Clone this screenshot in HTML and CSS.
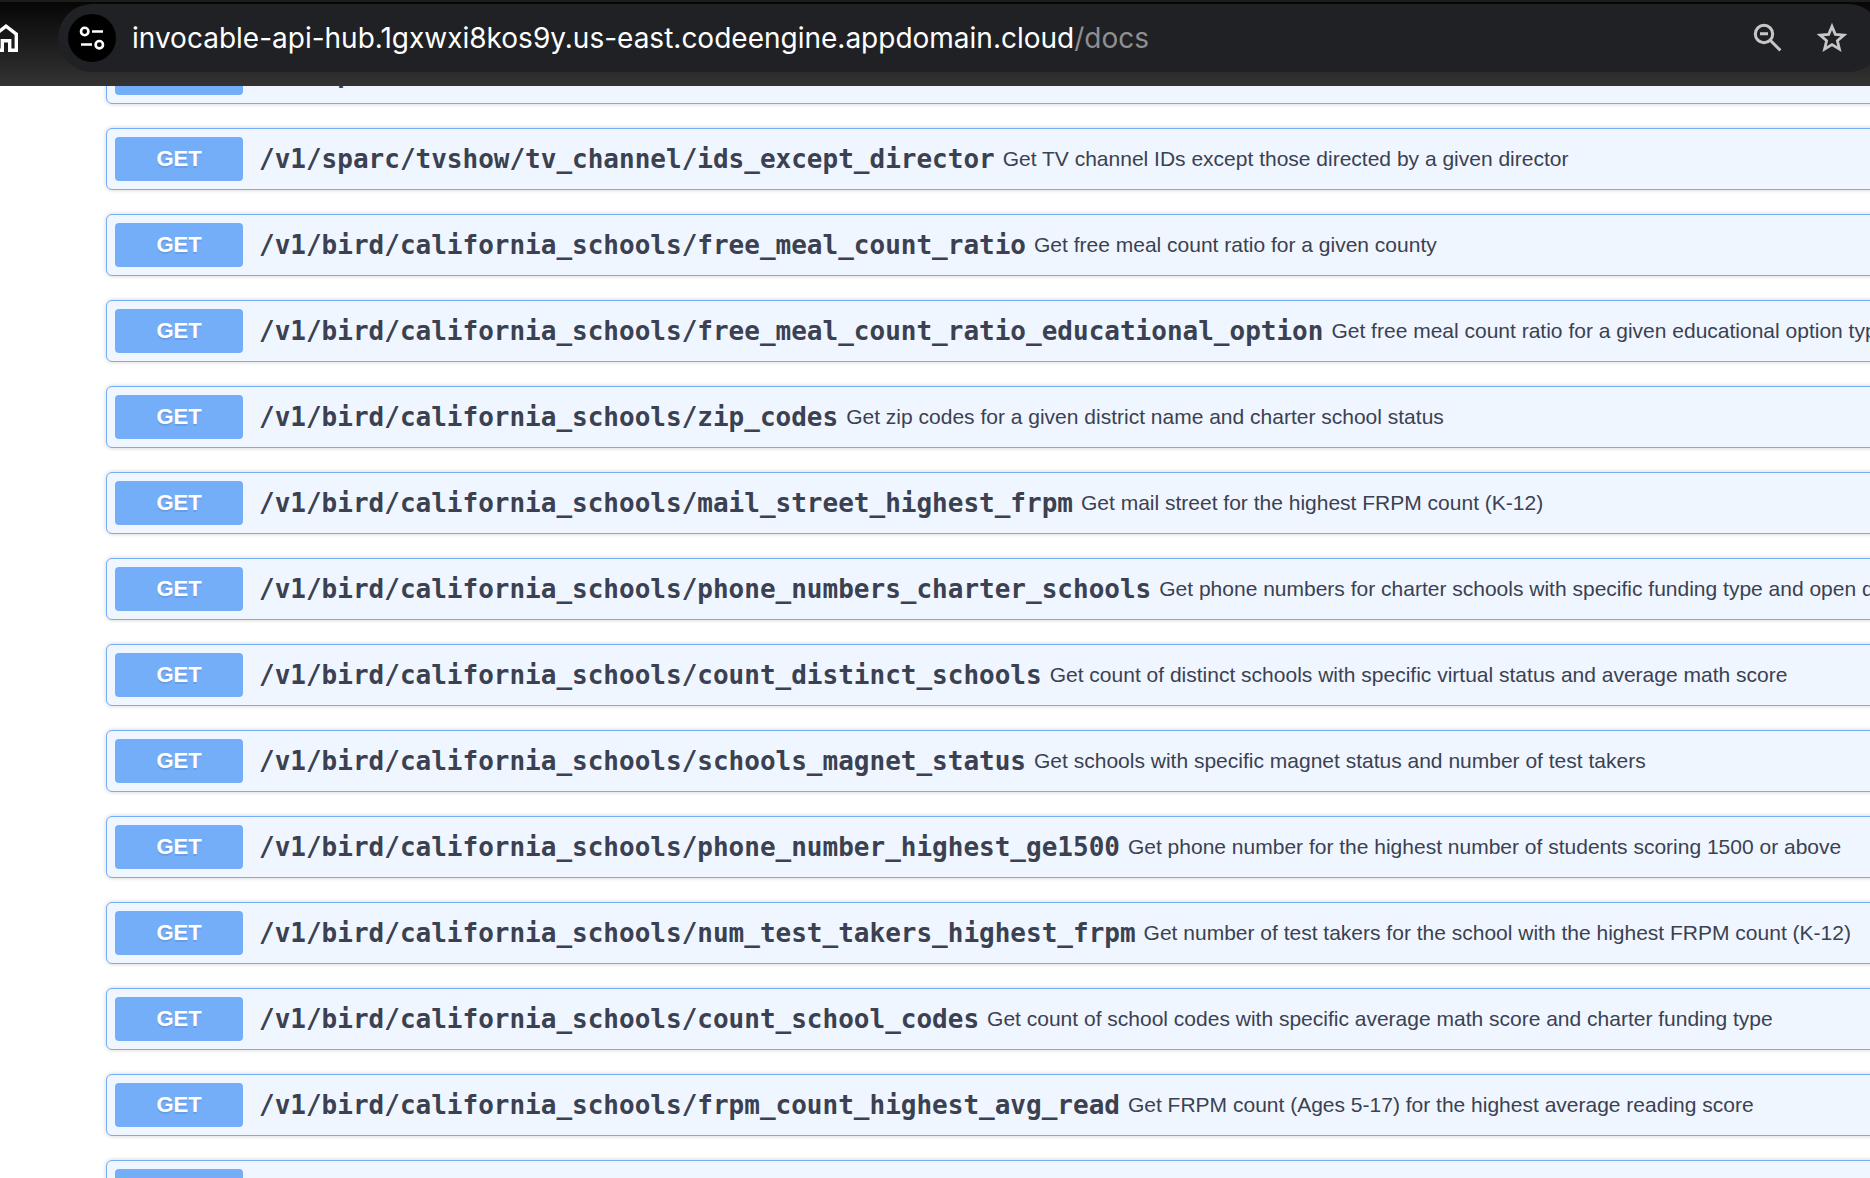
FILE: index.html
```html
<!DOCTYPE html>
<html lang="en">
<head>
<meta charset="utf-8">
<title>invocable-api-hub docs</title>
<link rel="stylesheet" href="styles.css">
</head>
<body>
<header class="toolbar">
  <button class="icon-button home" aria-label="Home">
    <svg width="30" height="32" viewBox="0 0 30 32" fill="none" stroke="#fff" stroke-width="3.4"><path d="M4.7 28.3V12.2L15 4.1l10.3 8.1v16.1h-6.6v-9.6h-7.4v9.6z"/></svg>
  </button>
  <div class="address">
    <button class="icon-button site-info" aria-label="View site information">
      <svg width="48" height="48" viewBox="0 0 48 48" fill="none" stroke="#fff" stroke-width="2.6"><circle cx="16.7" cy="17.5" r="3.7"/><path d="M24 17.5h11M13 30.5h11"/><circle cx="31.3" cy="30.7" r="3.7"/></svg>
    </button>
    <div class="url">invocable-api-hub.1gxwxi8kos9y.us-east.codeengine.appdomain.cloud<span class="url-path">/docs</span></div>
    <button class="icon-button" aria-label="Zoom out">
      <svg width="32" height="32" viewBox="0 0 32 32" fill="none" stroke="#c7c7c7" stroke-width="3"><circle cx="12" cy="12" r="8.7"/><path d="M18 18l10.4 10.4M8 11.8h8"/></svg>
    </button>
    <button class="icon-button" aria-label="Bookmark this page">
      <svg width="32" height="32" viewBox="0 0 32 32" fill="none" stroke="#c7c7c7" stroke-width="2.8"><path d="M16 4.5l3.3 7.9 8.6.7-6.5 5.6 2 8.4-7.4-4.5-7.4 4.5 2-8.4-6.5-5.6 8.6-.7z"/></svg>
    </button>
  </div>
</header>
<main class="viewport">
  <div class="operations">
    <button class="operation"><span class="method">GET</span><span class="path">/v1/sparc</span></button>
    <button class="operation"><span class="method">GET</span><span class="path">/v1/sparc/tvshow/tv_channel/ids_except_director</span><span class="summary">Get TV channel IDs except those directed by a given director</span></button>
    <button class="operation"><span class="method">GET</span><span class="path">/v1/bird/california_schools/free_meal_count_ratio</span><span class="summary">Get free meal count ratio for a given county</span></button>
    <button class="operation"><span class="method">GET</span><span class="path">/v1/bird/california_schools/free_meal_count_ratio_educational_option</span><span class="summary">Get free meal count ratio for a given educational option type</span></button>
    <button class="operation"><span class="method">GET</span><span class="path">/v1/bird/california_schools/zip_codes</span><span class="summary">Get zip codes for a given district name and charter school status</span></button>
    <button class="operation"><span class="method">GET</span><span class="path">/v1/bird/california_schools/mail_street_highest_frpm</span><span class="summary">Get mail street for the highest FRPM count (K-12)</span></button>
    <button class="operation"><span class="method">GET</span><span class="path">/v1/bird/california_schools/phone_numbers_charter_schools</span><span class="summary">Get phone numbers for charter schools with specific funding type and open date</span></button>
    <button class="operation"><span class="method">GET</span><span class="path">/v1/bird/california_schools/count_distinct_schools</span><span class="summary">Get count of distinct schools with specific virtual status and average math score</span></button>
    <button class="operation"><span class="method">GET</span><span class="path">/v1/bird/california_schools/schools_magnet_status</span><span class="summary">Get schools with specific magnet status and number of test takers</span></button>
    <button class="operation"><span class="method">GET</span><span class="path">/v1/bird/california_schools/phone_number_highest_ge1500</span><span class="summary">Get phone number for the highest number of students scoring 1500 or above</span></button>
    <button class="operation"><span class="method">GET</span><span class="path">/v1/bird/california_schools/num_test_takers_highest_frpm</span><span class="summary">Get number of test takers for the school with the highest FRPM count (K-12)</span></button>
    <button class="operation"><span class="method">GET</span><span class="path">/v1/bird/california_schools/count_school_codes</span><span class="summary">Get count of school codes with specific average math score and charter funding type</span></button>
    <button class="operation"><span class="method">GET</span><span class="path">/v1/bird/california_schools/frpm_count_highest_avg_read</span><span class="summary">Get FRPM count (Ages 5-17) for the highest average reading score</span></button>
    <button class="operation"><span class="method">GET</span></button>
  </div>
</main>
</body>
</html>
```

FILE: styles.css
```css
* { box-sizing: border-box; }

body {
  margin: 0;
  height: 100vh;
  display: flex;
  flex-direction: column;
  overflow: hidden;
  background: #fff;
  color: #3b4151;
  font-family: "Liberation Sans", Arial, sans-serif;
}

button {
  margin: 0;
  padding: 0;
  border: 0;
  background: none;
  font: inherit;
  color: inherit;
  cursor: pointer;
}

.toolbar {
  flex: none;
  display: flex;
  align-items: flex-start;
  gap: 37px;
  height: 86px;
  padding-top: 2px;
  border-top: 2px solid #1c1c1a;
  background: linear-gradient(#060606, #333);
}

.icon-button {
  flex: none;
  display: flex;
}

.home {
  margin: 18px 0 0 -9px;
}

.address {
  flex: 1;
  display: flex;
  align-items: center;
  gap: 32px;
  height: 68px;
  margin-right: -12px;
  padding: 0 34px 0 10px;
  border-radius: 34px;
  background: #202124;
}

.site-info {
  border-radius: 50%;
  background: #000;
}

.url {
  flex: 1;
  margin-left: -16px;
  font-family: Inter, sans-serif;
  font-size: 28px;
  white-space: nowrap;
  color: #fff;
}

.url-path { color: #8e8f91; }

.viewport {
  flex: 1;
  min-height: 0;
  overflow: hidden;
}

.operations {
  display: flex;
  flex-direction: column;
  gap: 24px;
  margin: -44px -20px 0 106px;
}

.operation {
  display: flex;
  align-items: center;
  height: 62px;
  padding: 8px;
  border: 1px solid #74adf8;
  border-radius: 6px;
  background: #eff6ff;
  box-shadow: 0 0 4px rgba(0, 0, 0, 0.19);
  text-align: left;
  white-space: nowrap;
}

.method {
  flex: none;
  width: 128px;
  border-radius: 4px;
  background: #74adf8;
  color: #fff;
  font-size: 22px;
  font-weight: 700;
  line-height: 44px;
  text-align: center;
  text-shadow: 0 2px 0 rgba(0, 0, 0, 0.1);
}

.path {
  margin-left: 16px;
  font-family: "DejaVu Sans Mono", monospace;
  font-size: 26px;
  font-weight: 700;
}

.summary {
  margin-left: 8px;
  font-size: 21px;
}
```
